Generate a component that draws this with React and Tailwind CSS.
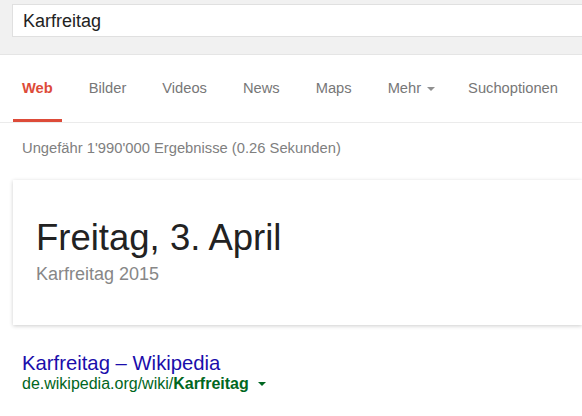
import React from "react";

export default function App() {
  const tabs = ["Bilder", "Videos", "News", "Maps"];
  return (
    <div className="w-[582px] h-[416px] overflow-hidden bg-white" style={{ fontFamily: '"Liberation Sans", Arial, sans-serif' }}>
      <div className="h-[55px] bg-[#f1f1f1] border-b border-[#e5e5e5] pt-[4px] pl-[12px]">
        <div className="h-[33px] bg-white border border-[#e0e0e0] border-r-0 pl-[10px] pt-[1px] flex items-center text-[18px] text-[#222]">
          Karfreitag
        </div>
      </div>
      <div className="h-[68px] border-b border-[#ebebeb] flex items-stretch pl-[13px] text-[14.7px] text-[#777]">
        <div className="px-[9px] flex items-center border-b-[3px] border-[#dd4b39] pt-[3px] text-[#dd4b39] font-bold">Web</div>
        {tabs.map((t) => (
          <div key={t} className="ml-[18px] px-[9px] flex items-center pt-[3px] border-b-[3px] border-transparent">{t}</div>
        ))}
        <div className="ml-[18px] px-[9px] flex items-center pt-[3px] border-b-[3px] border-transparent">
          Mehr
          <span className="ml-[6px] inline-block w-0 h-0 border-l-[4px] border-r-[4px] border-t-[4px] border-l-transparent border-r-transparent border-t-[#909090]"></span>
        </div>
        <div className="ml-[15px] px-[9px] flex items-center pt-[3px] border-b-[3px] border-transparent">Suchoptionen</div>
      </div>
      <div className="pl-[22px] pt-[16px] text-[14.75px] text-[#808080] leading-[18px]">
        Ungefähr 1'990'000 Ergebnisse (0.26 Sekunden)
      </div>
      <div className="ml-[13px] mt-[23px] h-[145px] bg-white shadow-[0_1px_4px_rgba(0,0,0,0.2)] pl-[23px] pt-[37px]">
        <div className="text-[36.5px] leading-[42px] text-[#222]">Freitag, 3. April</div>
        <div className="text-[18px] leading-[22px] mt-[4px] text-[#878787]">Karfreitag 2015</div>
      </div>
      <div className="pl-[22px] pt-[27px]">
        <div className="text-[20.3px] leading-[22px] text-[#1a0dab]">Karfreitag – Wikipedia</div>
        <div className="text-[16px] leading-[20px] text-[#006621] flex items-center">
          de.wikipedia.org/wiki/<b>Karfreitag</b>
          <span className="ml-[9px] inline-block w-0 h-0 border-l-[4px] border-r-[4px] border-t-[4px] border-l-transparent border-r-transparent border-t-[#006621]"></span>
        </div>
      </div>
    </div>
  );
}
